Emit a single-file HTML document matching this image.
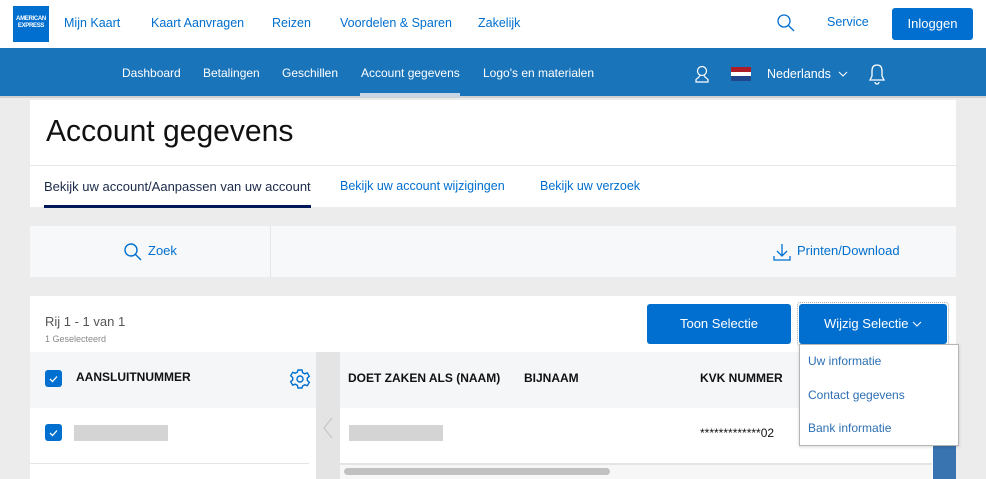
<!DOCTYPE html>
<html><head><style>
*{margin:0;padding:0;box-sizing:border-box}
body{width:986px;height:479px;overflow:hidden;background:#ececec;font-family:"Liberation Sans",sans-serif;position:relative}
.a{position:absolute}
.t{position:absolute;white-space:nowrap}
</style></head><body>
<div class="a" style="left:0;top:0;width:986px;height:48px;background:#fff"></div>
<div class="a" style="left:13px;top:6px;width:36px;height:36px;background:#016fd0"></div>
<div class="t" style="left:13px;top:16px;width:36px;font-size:6px;color:#fff;font-weight:bold;text-align:center;line-height:7px;letter-spacing:-.3px">AMERICAN<br>EXPRESS</div>
<div class="t" style="left:64px;top:16px;font-size:12.5px;color:#006fcf">Mijn Kaart</div>
<div class="t" style="left:151px;top:16px;font-size:12.5px;color:#006fcf">Kaart Aanvragen</div>
<div class="t" style="left:272px;top:16px;font-size:12.5px;color:#006fcf">Reizen</div>
<div class="t" style="left:340px;top:16px;font-size:12.5px;color:#006fcf">Voordelen &amp; Sparen</div>
<div class="t" style="left:478px;top:16px;font-size:12.5px;color:#006fcf">Zakelijk</div>
<svg class="a" style="left:776px;top:13px" width="20" height="20"><circle cx="8" cy="8" r="6" fill="none" stroke="#006fcf" stroke-width="1.3"/><path d="M12.5 12.5L18 18" stroke="#006fcf" stroke-width="1.3"/></svg>
<div class="t" style="left:827px;top:15px;font-size:12.5px;color:#006fcf">Service</div>
<div class="a" style="left:892px;top:8px;width:81px;height:32px;background:#006fcf;border-radius:3px;color:#fff;font-size:13px;text-align:center;line-height:31px">Inloggen</div>
<div class="a" style="left:0;top:48px;width:986px;height:50px;background:#1a74ba;border-bottom:2px solid #d0d0d0"></div>
<div class="t" style="left:122px;top:66px;font-size:12px;color:#fff">Dashboard</div>
<div class="t" style="left:203px;top:66px;font-size:12px;color:#fff">Betalingen</div>
<div class="t" style="left:282px;top:66px;font-size:12px;color:#fff">Geschillen</div>
<div class="t" style="left:361px;top:66px;font-size:12px;color:#fff">Account gegevens</div>
<div class="a" style="left:360px;top:93px;width:100px;height:4px;background:#c7d7e6"></div>
<div class="t" style="left:483px;top:66px;font-size:12px;color:#fff">Logo's en materialen</div>
<svg class="a" style="left:692px;top:64px" width="20" height="20"><circle cx="10" cy="7" r="4.5" fill="none" stroke="#fff" stroke-width="1.2"/><path d="M8 11.5c-1 2-3 3-4 4v2.5h12v-2.5c-1-1-3-2-4-4" fill="none" stroke="#fff" stroke-width="1.2"/></svg>
<div class="a" style="left:731px;top:67px;width:20px;height:4.5px;background:#ae1c28"></div>
<div class="a" style="left:731px;top:71.5px;width:20px;height:4.5px;background:#fff"></div>
<div class="a" style="left:731px;top:76px;width:20px;height:4.5px;background:#21468b"></div>
<div class="t" style="left:767px;top:67px;font-size:12.5px;color:#fff">Nederlands</div>
<svg class="a" style="left:838px;top:71px" width="10" height="7"><path d="M1 1l4 4 4-4" fill="none" stroke="#fff"/></svg>
<svg class="a" style="left:867px;top:62px" width="20" height="24"><path d="M10 3c-4 0-5 3-5 6v5l-2 4h14l-2-4V9c0-3-1-6-5-6zM8 20a2 2 0 0 0 4 0" fill="none" stroke="#fff" stroke-width="1.3"/></svg>
<div class="a" style="left:30px;top:100px;width:926px;height:107px;background:#fff"></div>
<div class="a" style="left:30px;top:165px;width:926px;height:1px;background:#e6e6e6"></div>
<div class="t" style="left:46px;top:113px;font-size:31px;color:#111;transform:scaleX(0.97);transform-origin:left">Account gegevens</div>
<div class="t" style="left:44px;top:179px;font-size:13px;color:#1b2a4a">Bekijk uw account/Aanpassen van uw account</div>
<div class="a" style="left:44px;top:205px;width:267px;height:3px;background:#00175a"></div>
<div class="t" style="left:340px;top:179px;font-size:12.5px;color:#006fcf">Bekijk uw account wijzigingen</div>
<div class="t" style="left:540px;top:179px;font-size:12.5px;color:#006fcf">Bekijk uw verzoek</div>
<div class="a" style="left:30px;top:226px;width:926px;height:51px;background:#f7f8f9"></div>
<div class="a" style="left:270px;top:226px;width:1px;height:51px;background:#e6e6e6"></div>
<svg class="a" style="left:123px;top:242px" width="20" height="20"><circle cx="8" cy="8" r="6" fill="none" stroke="#006fcf" stroke-width="1.4"/><path d="M12.5 12.5L18 18" stroke="#006fcf" stroke-width="1.4"/></svg>
<div class="t" style="left:148px;top:243px;font-size:13px;color:#006fcf">Zoek</div>
<svg class="a" style="left:772px;top:242px" width="20" height="20"><path d="M10 2v12M5 9l5 5 5-5M2 14v4h16v-4" fill="none" stroke="#006fcf" stroke-width="1.3"/></svg>
<div class="t" style="left:797px;top:243px;font-size:13px;color:#006fcf">Printen/Download</div>
<div class="a" style="left:30px;top:296px;width:926px;height:183px;background:#fff"></div>
<div class="t" style="left:45px;top:314px;font-size:13px;color:#555">Rij 1 - 1 van 1</div>
<div class="t" style="left:45px;top:334px;font-size:9px;color:#888">1 Geselecteerd</div>
<div class="a" style="left:647px;top:304px;width:144px;height:40px;background:#006fcf;border-radius:3px;color:#fff;font-size:13px;text-align:center;line-height:40px">Toon Selectie</div>
<div class="a" style="left:797px;top:302px;width:152px;height:44px;border:1px dotted #aaa;border-radius:3px"></div>
<div class="a" style="left:799px;top:304px;width:148px;height:40px;background:#006fcf;border-radius:3px;color:#fff;font-size:13px;line-height:40px;padding-left:25px">Wijzig Selectie</div>
<svg class="a" style="left:912px;top:321px" width="10" height="7"><path d="M1 1l4 4 4-4" fill="none" stroke="#fff"/></svg>
<div class="a" style="left:30px;top:352px;width:902px;height:56px;background:#f5f6f8"></div>
<div class="a" style="left:316px;top:352px;width:24px;height:127px;background:#e4e4e4"></div>
<svg class="a" style="left:321px;top:416px" width="14" height="24"><path d="M11 2L3 12l8 10" fill="none" stroke="#c8c8c8" stroke-width="1.3"/></svg>
<div class="a" style="left:45px;top:370px;width:17px;height:17px;background:#006fcf;border-radius:3px"></div>
<svg class="a" style="left:45px;top:370px" width="17" height="17"><path d="M5 9l2.5 2.5L12 6.5" fill="none" stroke="#fff" stroke-width="1.3"/></svg>
<div class="t" style="left:76px;top:370px;font-size:12px;font-weight:bold;color:#111">AANSLUITNUMMER</div>
<svg class="a" style="left:289px;top:368px" width="22" height="22"><circle cx="11" cy="11" r="3" fill="none" stroke="#006fcf" stroke-width="1.4"/><path d="M9 2h4l.6 2.6 2.2 1.2 2.5-.9 2 3.4-2 1.8v2.4l2 1.8-2 3.4-2.5-.9-2.2 1.2L13 20H9l-.6-2.6-2.2-1.2-2.5.9-2-3.4 2-1.8V9.5L1.7 7.7l2-3.4 2.5.9 2.2-1.2z" fill="none" stroke="#006fcf" stroke-width="1.4"/></svg>
<div class="t" style="left:348px;top:371px;font-size:12px;font-weight:bold;color:#111">DOET ZAKEN ALS (NAAM)</div>
<div class="t" style="left:524px;top:371px;font-size:12px;font-weight:bold;color:#111">BIJNAAM</div>
<div class="t" style="left:700px;top:371px;font-size:12px;font-weight:bold;color:#111">KVK NUMMER</div>
<div class="a" style="left:45px;top:424px;width:17px;height:17px;background:#006fcf;border-radius:3px"></div>
<svg class="a" style="left:45px;top:424px" width="17" height="17"><path d="M5 9l2.5 2.5L12 6.5" fill="none" stroke="#fff" stroke-width="1.3"/></svg>
<div class="a" style="left:74px;top:425px;width:94px;height:16px;background:#d4d4d4"></div>
<div class="a" style="left:349px;top:425px;width:94px;height:16px;background:#d4d4d4"></div>
<div class="t" style="left:700px;top:426px;font-size:12px;color:#111">*************02</div>
<div class="a" style="left:30px;top:463px;width:279px;height:1px;background:#e4e4e4"></div>
<div class="a" style="left:340px;top:463px;width:592px;height:2px;background:#e4e4e4"></div>
<div class="a" style="left:340px;top:465px;width:592px;height:14px;background:#f7f7f7"></div>
<div class="a" style="left:344px;top:468px;width:266px;height:7px;background:#c1c1c1;border-radius:4px"></div>
<div class="a" style="left:933px;top:446px;width:23px;height:33px;background:#3a74b0"></div>
<div class="a" style="left:799px;top:344px;width:160px;height:102px;background:#fff;border:1px solid #b5b5b5;box-shadow:0 1px 3px rgba(0,0,0,.15)"></div>
<div class="t" style="left:808px;top:354px;font-size:12px;color:#2d6fb3">Uw informatie</div>
<div class="t" style="left:808px;top:388px;font-size:12px;color:#2d6fb3">Contact gegevens</div>
<div class="t" style="left:808px;top:421px;font-size:12px;color:#2d6fb3">Bank informatie</div>
</body></html>
